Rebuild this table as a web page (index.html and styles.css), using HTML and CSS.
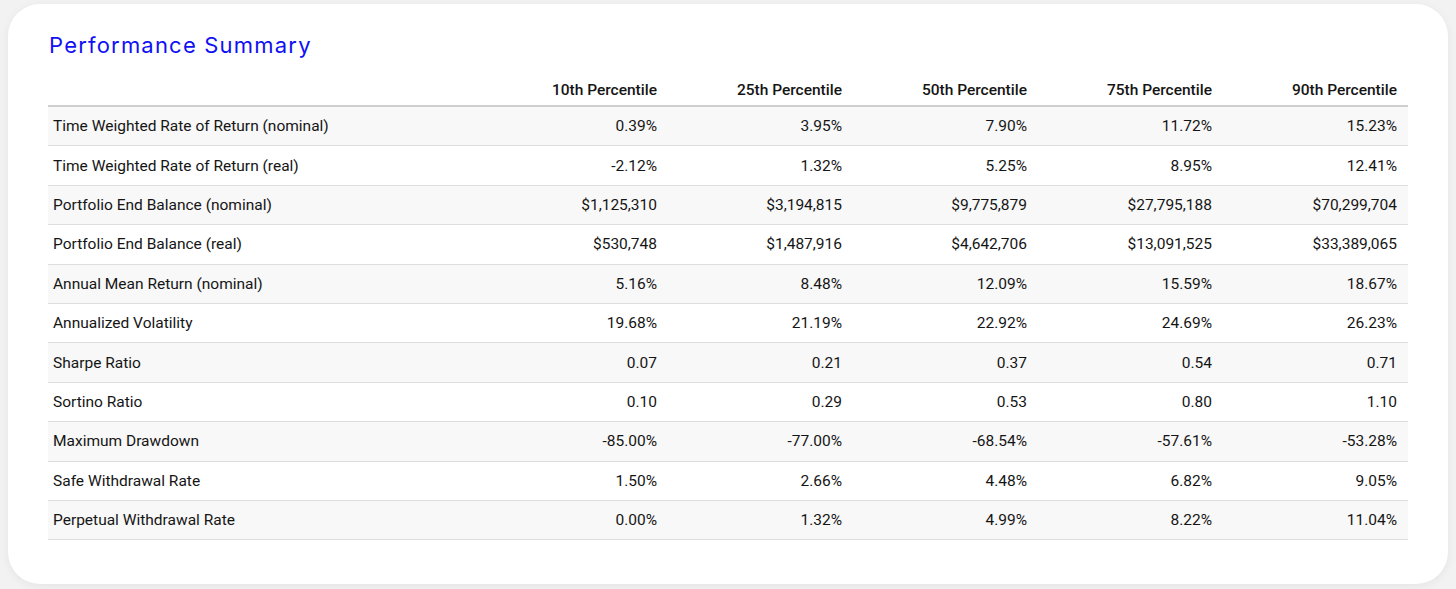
FILE: index.html
```html
<!DOCTYPE html>
<html>
<head>
<meta charset="utf-8">
<link rel="stylesheet" href="styles.css">
</head>
<body>
<div class="card">
  <h2 class="title">Performance Summary</h2>
  <table class="perf">
    <thead>
      <tr>
        <th class="label"></th>
        <th>10th Percentile</th>
        <th>25th Percentile</th>
        <th>50th Percentile</th>
        <th>75th Percentile</th>
        <th>90th Percentile</th>
      </tr>
    </thead>
    <tbody>
      <tr><td class="label">Time Weighted Rate of Return (nominal)</td><td>0.39%</td><td>3.95%</td><td>7.90%</td><td>11.72%</td><td>15.23%</td></tr>
      <tr><td class="label">Time Weighted Rate of Return (real)</td><td>-2.12%</td><td>1.32%</td><td>5.25%</td><td>8.95%</td><td>12.41%</td></tr>
      <tr><td class="label">Portfolio End Balance (nominal)</td><td>$1,125,310</td><td>$3,194,815</td><td>$9,775,879</td><td>$27,795,188</td><td>$70,299,704</td></tr>
      <tr><td class="label">Portfolio End Balance (real)</td><td>$530,748</td><td>$1,487,916</td><td>$4,642,706</td><td>$13,091,525</td><td>$33,389,065</td></tr>
      <tr><td class="label">Annual Mean Return (nominal)</td><td>5.16%</td><td>8.48%</td><td>12.09%</td><td>15.59%</td><td>18.67%</td></tr>
      <tr><td class="label">Annualized Volatility</td><td>19.68%</td><td>21.19%</td><td>22.92%</td><td>24.69%</td><td>26.23%</td></tr>
      <tr><td class="label">Sharpe Ratio</td><td>0.07</td><td>0.21</td><td>0.37</td><td>0.54</td><td>0.71</td></tr>
      <tr><td class="label">Sortino Ratio</td><td>0.10</td><td>0.29</td><td>0.53</td><td>0.80</td><td>1.10</td></tr>
      <tr><td class="label">Maximum Drawdown</td><td>-85.00%</td><td>-77.00%</td><td>-68.54%</td><td>-57.61%</td><td>-53.28%</td></tr>
      <tr><td class="label">Safe Withdrawal Rate</td><td>1.50%</td><td>2.66%</td><td>4.48%</td><td>6.82%</td><td>9.05%</td></tr>
      <tr><td class="label">Perpetual Withdrawal Rate</td><td>0.00%</td><td>1.32%</td><td>4.99%</td><td>8.22%</td><td>11.04%</td></tr>
    </tbody>
  </table>
</div>
</body>
</html>
```
FILE: styles.css
```css
html, body {
  margin: 0;
  padding: 0;
  background: #f2f2f2;
}
body {
  padding: 4px 8px 6px 8px;
  font-family: Roboto, "Liberation Sans", sans-serif;
  color: #151515;
}
.card {
  background: #fff;
  border-radius: 32px;
  box-shadow: 0 2px 10px rgba(0,0,0,0.06);
  padding: 27px 40px 44px 40px;
}
.title {
  margin: 0 0 13px 1px;
  font-family: Inter, "Open Sans", sans-serif;
  font-weight: 400;
  font-size: 22px;
  line-height: 28px;
  letter-spacing: 1.2px;
  color: #1010f5;
}
.perf {
  width: 100%;
  border-collapse: collapse;
  font-size: 15.5px;
}
.perf th {
  font-weight: 500;
  text-align: right;
  height: 27px;
  vertical-align: bottom;
  padding: 0 11px 6px 11px;
  border-bottom: 2px solid #cfcfcf;
  width: 163px;
}
.perf th.label {
  width: auto;
}
.perf td {
  text-align: right;
  padding: 0 11px;
  height: 38.4px;
  border-bottom: 1px solid #dedede;
}
.perf td.label {
  text-align: left;
  padding-left: 5px;
}
.perf tbody tr:nth-child(odd) {
  background: #f8f8f8;
}
```
